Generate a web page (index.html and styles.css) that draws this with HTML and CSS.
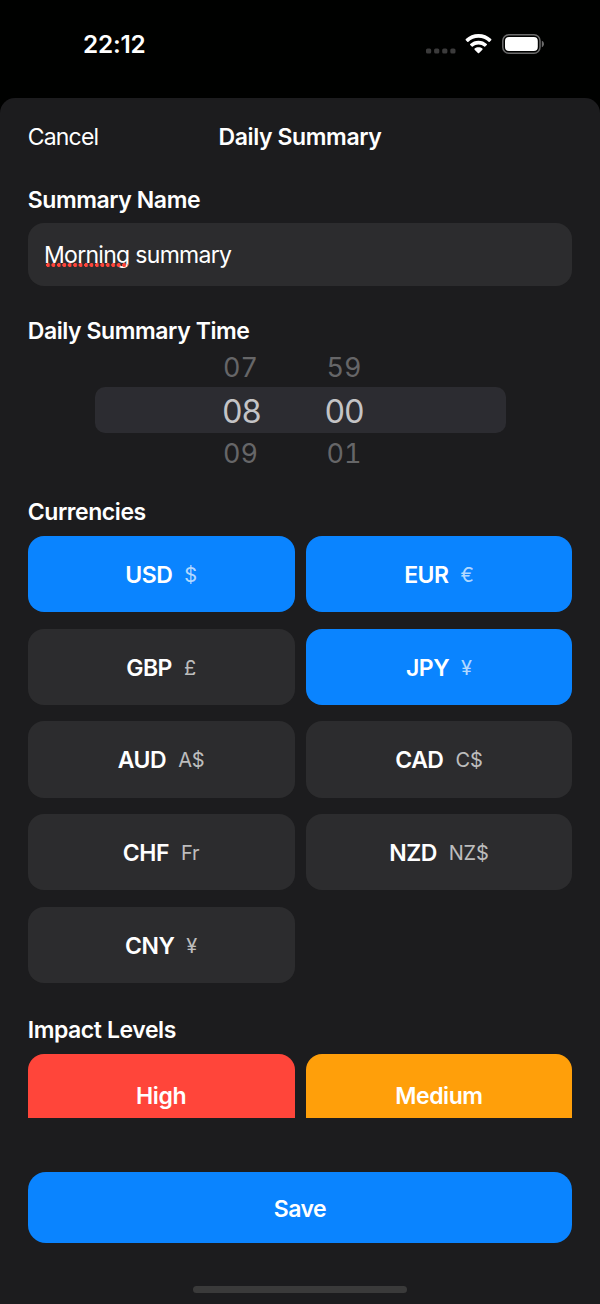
FILE: index.html
```html
<!DOCTYPE html>
<html lang="en">
<head>
<meta charset="utf-8">
<title>Daily Summary</title>
<link rel="stylesheet" href="styles.css">
</head>
<body>
<div class="screen">
  <header class="status">
    <span class="clock">22:12</span>
    <div class="status-icons">
      <svg class="signal" width="31" height="6" viewBox="0 0 31 6" fill="#3b3b3b"><rect x="0" y="0.4" width="5.2" height="5.2" rx="1.6"/><rect x="8.1" y="0.4" width="5.2" height="5.2" rx="1.6"/><rect x="16.2" y="0.4" width="5.2" height="5.2" rx="1.6"/><rect x="24.3" y="0.4" width="5.2" height="5.2" rx="1.6"/></svg>
      <svg class="wifi" width="27" height="20" viewBox="0 0 27 20" fill="#fff"><path d="M13.5 0C18.400 0 22.900 1.900 26.200 5.100Q26.700 5.700 26.200 6.200L24.700 7.700Q24.200 8.200 23.600 7.700C20.900 5.200 17.400 3.800 13.500 3.800C9.600 3.800 6.100 5.200 3.400 7.700Q2.800 8.200 2.300 7.700L.8 6.200Q.3 5.700 .8 5.100C4.100 1.900 8.600 0 13.500 0Z"/><path d="M13.500 6.700C16.700 6.700 19.600 7.900 21.800 10Q22.300 10.500 21.800 11.100L20.200 12.600Q19.700 13.100 19.200 12.600C17.700 11.200 15.700 10.400 13.500 10.400C11.300 10.400 9.300 11.200 7.800 12.600Q7.300 13.100 6.800 12.600L5.200 11.100Q4.700 10.500 5.200 10C7.400 7.900 10.300 6.700 13.500 6.700Z"/><path d="M13.500 13.200C15 13.200 16.400 13.700 17.400 14.600Q17.900 15.200 17.400 15.700L14.100 19Q13.500 19.500 12.900 19L9.600 15.700Q9.100 15.200 9.600 14.600C10.600 13.700 12 13.200 13.500 13.200Z"/></svg>
      <svg class="battery" width="43" height="20" viewBox="0 0 43 20"><rect x=".8" y=".8" width="37.2" height="18.4" rx="6" fill="none" stroke="#6c6c6c" stroke-width="1.5"/><rect x="3" y="3" width="32.8" height="14" rx="4" fill="#fff"/><path d="M39.8 6.800c2.900 1 2.900 5.400 0 6.400z" fill="#6c6c6c"/></svg>
    </div>
  </header>
  <main class="sheet">
    <nav class="nav">
      <span class="cancel">Cancel</span>
      <h1 class="title">Daily Summary</h1>
    </nav>
    <div class="scroll">
      <section class="name-section">
        <h2 class="label">Summary Name</h2>
        <div class="field"><span class="misspelled">Morning</span> summary</div>
      </section>
      <section class="time-section">
        <h2 class="label">Daily Summary Time</h2>
        <div class="picker">
          <div class="picker-row far"><span>07</span><span>59</span></div>
          <div class="picker-row selected"><span>08</span><span>00</span></div>
          <div class="picker-row far"><span>09</span><span>01</span></div>
        </div>
      </section>
      <section class="currency-section">
        <h2 class="label">Currencies</h2>
        <div class="grid">
          <div class="tile on"><b>USD</b><i>$</i></div>
          <div class="tile on"><b>EUR</b><i>€</i></div>
          <div class="tile"><b>GBP</b><i>£</i></div>
          <div class="tile on"><b>JPY</b><i>¥</i></div>
          <div class="tile"><b>AUD</b><i>A$</i></div>
          <div class="tile"><b>CAD</b><i>C$</i></div>
          <div class="tile"><b>CHF</b><i>Fr</i></div>
          <div class="tile"><b>NZD</b><i>NZ$</i></div>
          <div class="tile"><b>CNY</b><i>¥</i></div>
        </div>
      </section>
      <section class="impact-section">
        <h2 class="label label-impact">Impact Levels</h2>
        <div class="grid">
          <div class="tile impact high"><b>High</b></div>
          <div class="tile impact medium"><b>Medium</b></div>
        </div>
      </section>
    </div>
    <div class="save">Save</div>
    <div class="home"></div>
  </main>
</div>
</body>
</html>
```
FILE: styles.css
```css
* { box-sizing: border-box; }
body {
  margin: 0;
  background: #000;
  color: #fff;
  font-family: Inter, "Liberation Sans", sans-serif;
  font-size: 23px;
  line-height: 28px;
}
h1, h2 { margin: 0; font-size: inherit; font-weight: 580; white-space: nowrap; }
.screen { width: 600px; height: 1304px; overflow: hidden; display: flex; flex-direction: column; background: #000100; }
.status { height: 98px; flex: none; display: flex; justify-content: space-between; padding: 30px 55.5px 0 83px; }
.clock { font-size: 24.3px; font-weight: 580; letter-spacing: -0.2px; }
.status-icons { display: flex; align-items: flex-start; padding-top: 4px; }
.signal { margin: 14px 7.5px 0 0; }
.wifi { margin-right: 10px; }

.sheet { flex: 1; min-height: 0; background: #1c1c1e; border-radius: 15px 15px 0 0; padding: 0 27.7px; display: flex; flex-direction: column; }
.nav { flex: none; height: 79px; padding-top: 25px; display: grid; grid-template-columns: 1fr auto 1fr; align-items: start; }
.cancel { letter-spacing: -0.8px; }
.title { letter-spacing: -0.4px; }
.scroll { flex: none; height: 940.7px; overflow: hidden; }
.label { height: 28px; letter-spacing: -0.42px; }
.name-section { padding-top: 9px; height: 140px; }
.field { margin-top: 9px; height: 62.5px; border-radius: 16px; background: #2c2c2e; padding: 18px 16.3px 0; letter-spacing: -0.7px; }
.misspelled { position: relative; }
.misspelled::after {
  content: "";
  position: absolute;
  left: 2px;
  top: 22px;
  width: 81.6px;
  height: 4px;
  background: radial-gradient(circle at 2px 2px, #ff453a 1.8px, transparent 2.2px) 0 0 / 5.44px 4px repeat-x;
}
.time-section { height: 180.5px; }
.picker { display: flex; flex-direction: column; align-items: center; padding-top: 10px; }
.picker-row { width: 411px; display: grid; grid-template-columns: 102.5px 1fr; padding-left: 127.7px; align-items: center; }
.picker-row.far { height: 24px; font-size: 27px; line-height: 26px; color: #666668; grid-template-columns: 103.5px 1fr; padding-left: 128.5px; font-variant-numeric: tabular-nums; }
.picker-row.selected { height: 46px; margin: 8px 0; border-radius: 10px; background: #2c2c31; color: #c4c4c6; font-size: 32px; line-height: 48px; padding-top: 1px; letter-spacing: -0.6px; }
.currency-section { height: 518.2px; }
.grid { display: grid; grid-template-columns: 1fr 1fr; gap: 16.5px 11px; margin-top: 10.5px; }
.tile { height: 76.2px; border-radius: 16px; background: #2c2c2e; display: flex; align-items: center; justify-content: center; gap: 12px; padding-top: 1.6px; }
.tile b { font-weight: 580; letter-spacing: -0.5px; }
.tile i { font-style: normal; font-size: 20px; letter-spacing: -0.2px; color: rgba(255, 255, 255, 0.7); }
.on { background: #0a84ff; }
.label-impact { padding-top: 0.7px; }
.impact { height: 84px; padding-top: 0; }
.impact b { letter-spacing: -0.42px; }
.high { background: #ff453a; }
.medium { background: #ff9f0a; }
.save { flex: none; margin-top: 54.8px; height: 71px; border-radius: 18px; background: #0a84ff; display: flex; align-items: center; justify-content: center; padding-top: 2px; font-weight: 580; letter-spacing: -0.5px; }
.home { flex: none; align-self: center; width: 214px; height: 7px; border-radius: 3.5px; margin-top: 42.5px; background: #3a3a3a; }
```
